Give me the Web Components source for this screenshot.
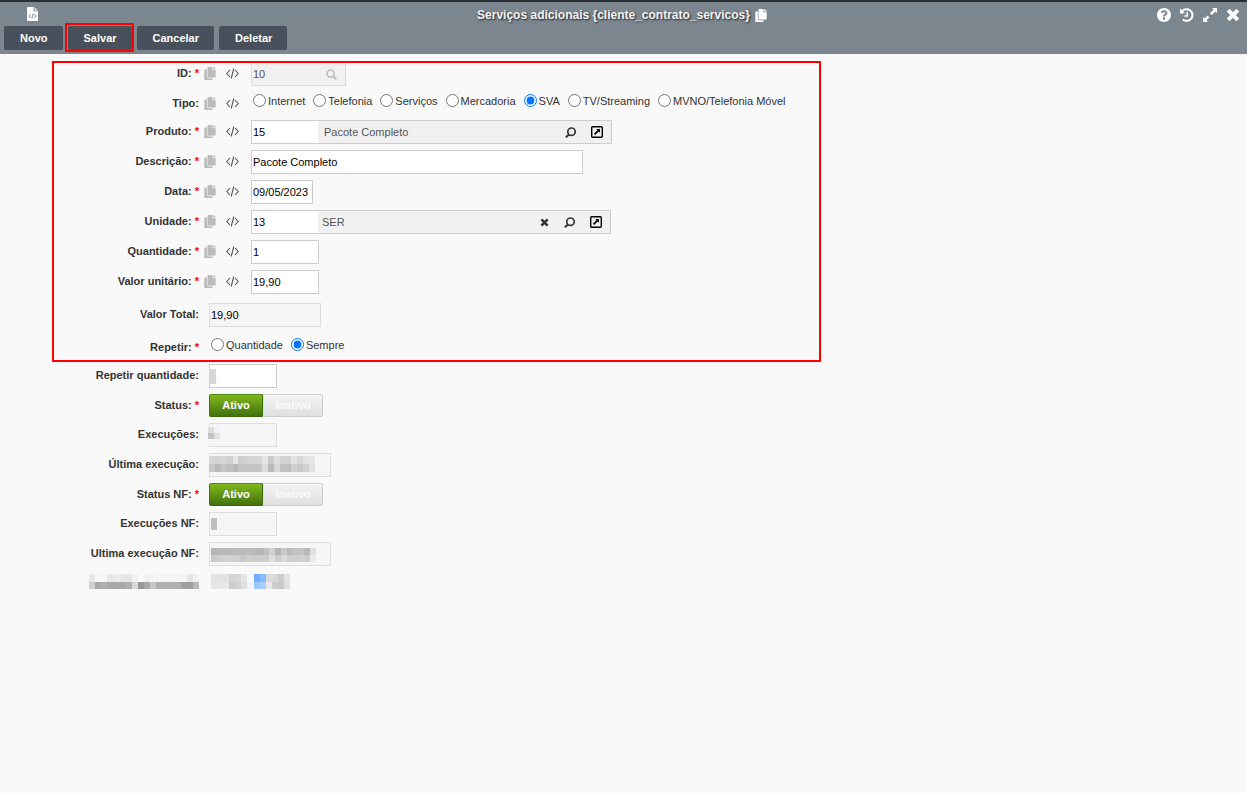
<!DOCTYPE html>
<html lang="pt-BR">
<head>
<meta charset="utf-8">
<title>Serviços adicionais</title>
<style>
  html, body { margin: 0; min-height: 100%; }
  body {
    background: #f9f9f9;
    color: #333;
    font-family: "Liberation Sans", Arial, sans-serif;
    font-size: 11px;
  }
</style>
</head>
<body>
<app-window>
  <window-bar slot="bar" heading="Serviços adicionais {cliente_contrato_servicos}">
    <tool-button>Novo</tool-button>
    <tool-button marked>Salvar</tool-button>
    <tool-button>Cancelar</tool-button>
    <tool-button>Deletar</tool-button>
  </window-bar>

  <marked-group>
    <text-field label="ID" required tools value="10" size="95" locked search></text-field>
    <radio-field label="Tipo" tools options="Internet|Telefonia|Serviços|Mercadoria|SVA|TV/Streaming|MVNO/Telefonia Móvel" value="SVA"></radio-field>
    <lookup-field label="Produto" required tools value="15" text="Pacote Completo" size="361"></lookup-field>
    <text-field label="Descrição" required tools value="Pacote Completo" size="332"></text-field>
    <text-field label="Data" required tools value="09/05/2023" size="62"></text-field>
    <lookup-field label="Unidade" required tools value="13" text="SER" size="360" clearable></lookup-field>
    <text-field label="Quantidade" required tools value="1" size="68"></text-field>
    <text-field label="Valor unitário" required tools value="19,90" size="68"></text-field>
    <text-field label="Valor Total" spaced value="19,90" size="112" computed></text-field>
    <radio-field label="Repetir" required spaced options="Quantidade|Sempre" value="Sempre"></radio-field>
  </marked-group>

  <text-field label="Repetir quantidade" size="68">
    <pixel-mask style="--x:0px;--y:5px" cols="2" width="13" height="15" cells="d6 fff d6 fc"></pixel-mask>
  </text-field>
  <toggle-field label="Status" required></toggle-field>
  <text-field label="Execuções" size="68" computed>
    <pixel-mask style="--x:-1px;--y:4px" cols="2" width="12" height="18" cells="dd f2 c4 e0 f4 f5"></pixel-mask>
  </text-field>
  <text-field label="Última execução" size="122" computed>
    <pixel-mask style="--x:0px;--y:3px" cols="18" width="106" height="16"
      cells="d6 d3 d6 d0 e6 ce d3 d4 d6 e6 cb de d3 d3 e2 d8 e4 e6 c8 b9 c4 c0 b8 c4 c4 c4 c4 dd bb d8 c0 c0 d0 c8 d2 e2"></pixel-mask>
  </text-field>
  <toggle-field label="Status NF" required></toggle-field>
  <text-field label="Execuções NF" size="68" computed>
    <pixel-mask style="--x:2px;--y:6px" cols="1" width="6" height="12" cells="bd"></pixel-mask>
  </text-field>
  <text-field label="Ultima execução NF" size="122" computed>
    <pixel-mask style="--x:2px;--y:6px" cols="18" width="105" height="14"
      cells="b5 b8 b8 b8 bb bb bb b8 b4 c0 d0 b3 c8 bb c3 c3 b8 de c8 d0 d2 d0 cf c8 d0 cc cc cc de cc d8 cf cf d2 cc ea"></pixel-mask>
  </text-field>
  <masked-row>
    <pixel-mask slot="label" inline cols="18" width="110" height="15"
      cells="e6 f5 f5 e6 ec e6 e6 f0 f9 f1 f5 f5 f4 f4 f4 f4 e6 f0 d0 a8 b0 a8 a8 a8 b0 d8 98 a8 c8 b0 b0 b0 b0 a0 a0 b8"></pixel-mask>
    <pixel-mask inline cols="13" width="79" height="15"
      cells="e4 e4 e2 d3 d8 e4 f4faff 70aeff 84bcff dadada d8 cc e4 e6 e8 e8 cc d2 e0 f0f5ff 9ac8ff a8d0ff e8 cc c8 e0"></pixel-mask>
  </masked-row>
</app-window>

<script>
const COPY = 'M320 448v40c0 13.255-10.745 24-24 24H24c-13.255 0-24-10.745-24-24V120c0-13.255 10.745-24 24-24h72v296c0 30.879 25.121 56 56 56h168zm0-344V0H152c-13.255 0-24 10.745-24 24v368c0 13.255 10.745 24 24 24h272c13.255 0 24-10.745 24-24V128H344c-13.2 0-24-10.8-24-24zm120.971-31.029L375.029 7.029A24 24 0 0 0 358.059 0H352v96h96v-6.059a24 24 0 0 0-7.029-16.97z';
const HELP = 'M504 256c0 136.997-111.043 248-248 248S8 392.997 8 256C8 119.083 119.043 8 256 8s248 111.083 248 248zM262.655 90c-54.497 0-89.255 22.957-116.549 63.758-3.536 5.286-2.353 12.415 2.715 16.258l34.699 26.31c5.205 3.947 12.621 3.008 16.665-2.122 17.864-22.658 30.113-35.797 57.303-35.797 20.429 0 45.698 13.148 45.698 32.958 0 14.976-12.363 22.667-32.534 33.976C247.128 238.528 216 254.941 216 296v4c0 6.627 5.373 12 12 12h56c6.627 0 12-5.373 12-12v-1.333c0-28.462 83.186-29.647 83.186-106.667 0-58.002-60.165-102-116.531-102zM256 338c-25.365 0-46 20.635-46 46 0 25.364 20.635 46 46 46s46-20.636 46-46c0-25.365-20.635-46-46-46z';
const svg = (w, h, box, body) => `<svg width="${w}" height="${h}" viewBox="${box}" aria-hidden="true">${body}</svg>`;
const ICONS = {
  copy: svg(12, 13, '0 0 448 512', `<path d="M60 96h60v310h230v50H60z" fill="currentColor" opacity=".45"/><path fill="currentColor" d="${COPY}"/>`),
  code: svg(13, 11, '0 0 13 11', '<path fill="none" stroke="currentColor" stroke-width="1.1" d="M4 2L.8 5.5 4 9M9 2l3.2 3.5L9 9M7.8.5L5.2 10.5"/>'),
  file: svg(11, 14, '0 0 11 14', '<path fill="currentColor" d="M1 0h5.6v4.2H11V13a1 1 0 0 1-1 1H1a1 1 0 0 1-1-1V1a1 1 0 0 1 1-1z"/><path fill="currentColor" opacity=".75" d="M7.5 0L11 3.5H7.5z"/><path fill="none" stroke="#6b757e" stroke-width=".9" d="M3.6 7.2L1.8 9l1.8 1.8M7.4 7.2L9.2 9l-1.8 1.8M6.2 6.4l-1.4 5.2"/>'),
  help: svg(14, 14, '8 8 496 496', `<path fill="currentColor" d="${HELP}"/>`),
  history: svg(14, 14, '0 0 14 14', '<path fill="none" stroke="currentColor" stroke-width="2" d="M2 3.6A5.8 5.8 0 1 1 2.8 11.4"/><path fill="currentColor" d="M0 .6V5.6h5z"/><path fill="none" stroke="currentColor" stroke-width="1.5" d="M7.2 3.8v4.1H4.4"/>'),
  expand: svg(14, 14, '0 0 14 14', '<path fill="currentColor" d="M9 0h5v5l-1.6-1.6-3.6 3.6-1.8-1.8 3.6-3.6zM0 9l1.6 1.6 3-3 1.8 1.8-3 3L5 14H0z"/>'),
  close: svg(14, 14, '0 0 14 14', '<path stroke="currentColor" stroke-width="4" d="M2.2 2.2l9.6 9.6M11.8 2.2L2.2 11.8"/>'),
  glass: svg(11, 11, '0 0 11 11', '<circle cx="4.6" cy="4.6" r="3.6" fill="none" stroke="currentColor" stroke-width="1.6"/><path stroke="currentColor" stroke-width="2" d="M7.2 7.2l3 3"/>'),
  find: svg(11, 11, '0 0 11 11', '<circle cx="6.5" cy="4.7" r="3.7" fill="none" stroke="currentColor" stroke-width="1.7"/><path stroke="currentColor" stroke-width="2" d="M4 7.4L.8 10.2"/>'),
  open: svg(12, 12, '0 0 12 12', '<rect x=".7" y=".7" width="10.6" height="10.6" rx="1" fill="none" stroke="#000" stroke-width="1.4"/><path fill="#000" d="M5.2 3h3.8v3.8L7.7 5.6 4.2 9.1 2.9 7.8l3.5-3.5z"/>'),
  clear: svg(9, 9, '0 0 9 9', '<path stroke="#333" stroke-width="2.5" d="M1.4 1.4l6.2 6.2M7.6 1.4L1.4 7.6"/>')
};
const iconButton = (icon, title) => `<button type="button" class="icon ${icon}" aria-label="${title}">${ICONS[icon]}</button>`;

const BASE = `
  * { box-sizing: border-box; }
  button, input { font: inherit; margin: 0; }
  svg { display: block; }
  .icon { padding: 0; border: 0; background: none; color: inherit; display: block; flex: none; cursor: pointer; }
`;
const define = (name, render, after) => customElements.define(name, class extends HTMLElement {
  connectedCallback() {
    if (this.shadowRoot) return;
    const root = this.attachShadow({ mode: 'open' });
    const template = document.createElement('template');
    template.innerHTML = render(this);
    root.append(template.content.cloneNode(true));
    if (after) after(root, this);
  }
});

define('app-window', () => `<style>
    :host { display: block; }
    form { display: flex; flex-direction: column; gap: 6px; padding: 8px 0; }
  </style>
  <slot name="bar"></slot>
  <main><form><slot></slot></form></main>`);

define('window-bar', el => `<style>${BASE}
    :host { display: block; background: #7c868f; color: #fff; border-top: 2px solid #2a2f33; padding: 0 4px 4px; }
    .top { display: grid; grid-template-columns: 1fr auto 1fr; height: 24px; align-items: center; }
    .start { padding-left: 23px; }
    .title { display: flex; align-items: center; gap: 5px; padding: 2px 3px 0 0; }
    h1 { margin: 0; font-size: 12px; line-height: 14px; color: #f4f4f4; text-shadow: 1px 1px 2px #222; }
    .actions { display: flex; justify-content: flex-end; gap: 9px; padding: 2px 3px 0 0; }
    nav { display: flex; gap: 5px; }
  </style>
  <div class="top">
    <div class="start">${iconButton('file', 'Código-fonte')}</div>
    <div class="title"><h1>${el.getAttribute('heading')}</h1>${iconButton('copy', 'Copiar')}</div>
    <div class="actions">${iconButton('help', 'Ajuda')}${iconButton('history', 'Histórico')}${iconButton('expand', 'Expandir')}${iconButton('close', 'Fechar')}</div>
  </div>
  <nav><slot></slot></nav>`);

define('tool-button', () => `<style>${BASE}
    :host { display: block; position: relative; }
    button { display: block; height: 24px; padding: 0 15px 0 16px; border: 0; border-radius: 2px; background: #48515b; color: #fff; font-weight: bold; }
    :host([marked])::after { content: ""; position: absolute; inset: -3px -2px -2px -3px; border: 2px solid #f00; pointer-events: none; }
  </style><button type="button"><slot></slot></button>`);

define('marked-group', () => `<style>
    :host { display: flex; flex-direction: column; gap: 6px; position: relative; }
    :host::after { content: ""; position: absolute; box-sizing: border-box; top: -1px; bottom: -4px; left: 52px; width: 769px; border: 2px solid #f00; pointer-events: none; }
  </style><slot></slot>`);

define('pixel-mask', el => {
  const cols = +el.getAttribute('cols');
  const cells = el.getAttribute('cells').split(' ');
  const rects = cells.map((c, i) => {
    const fill = c.length === 2 ? c + c + c : c;
    return `<rect x="${i % cols}" y="${Math.floor(i / cols)}" width="1" height="1" fill="#${fill}"/>`;
  }).join('');
  return `<style>
    :host { position: absolute; left: var(--x); top: var(--y); pointer-events: none; }
    :host([inline]) { position: static; display: block; }
    svg { display: block; }
  </style><svg width="${el.getAttribute('width')}" height="${el.getAttribute('height')}" viewBox="0 0 ${cols} ${cells.length / cols}" preserveAspectRatio="none" shape-rendering="crispEdges" aria-hidden="true">${rects}</svg>`;
});

const FIELD = `${BASE}
  :host { display: block; }
  :host([spaced]) { margin-top: 3px; }
  .row { display: flex; align-items: flex-start; }
  .caption { width: 199px; flex: none; text-align: right; line-height: 22px; font-weight: bold; color: #333; }
  .caption i { color: #f00; font-style: normal; }
  .tools { display: flex; align-items: center; gap: 10px; height: 22px; padding: 0 2px 0 5px; color: #bbb; }
  .tools .code { color: #555; }
  .control { position: relative; display: flex; margin-left: 10px; }
  input.box, .box { width: var(--size); height: 24px; border: 1px solid #ccc; border-radius: 0; background: #fff; color: #000; padding: 0 1px; outline: 0; }
  .computed .box { background: #f5f5f5; border-color: #ddd; }
`;
const field = (el, style, control, { tag = 'label', kind = '' } = {}) => {
  const star = el.hasAttribute('required') ? ' <i>*</i>' : '';
  const tie = tag === 'label' ? 'for="control"' : 'id="caption"';
  const tools = el.hasAttribute('tools') ? `<div class="tools">${iconButton('copy', 'Copiar')}${iconButton('code', 'Ver código')}</div>` : '';
  return `<style>${FIELD}${style}:host { --size: ${el.getAttribute('size') || 0}px; }</style>
    <div class="row ${kind}"><${tag} class="caption" ${tie}>${el.getAttribute('label')}:${star}</${tag}>${tools}<div class="control">${control}</div></div>`;
};

define('text-field', el => {
  const locked = el.hasAttribute('locked');
  const readonly = locked || el.hasAttribute('computed') ? 'readonly' : '';
  return field(el, `
    .locked .box { background: #f1f1f1; border-color: #ddd; color: #555; }
    .glass { position: absolute; right: 9px; top: 7px; color: #bbb; }
  `, `<input class="box" id="control" type="text" value="${el.getAttribute('value') || ''}" ${readonly}>${el.hasAttribute('search') ? iconButton('glass', 'Pesquisar') : ''}<slot></slot>`,
  { kind: locked ? 'locked' : el.hasAttribute('computed') ? 'computed' : '' });
});

define('lookup-field', el => field(el, `
    .box { display: flex; align-items: center; padding: 0 8px 0 0; background: #f1f1f1; color: #333; }
    .box input { height: 22px; border: 0; padding: 0 1px; outline: 0; }
    .key { width: 66px; background: #fff; color: #000; }
    .box .text { flex: 1; min-width: 0; padding-left: 6px; background: none; color: #555; }
    :host([clearable]) .box .text { padding-left: 4px; }
    .clear, .find { margin-right: 15px; }
  `, `<div class="box"><input class="key" id="control" type="text" value="${el.getAttribute('value')}"><input class="text" type="text" aria-label="Nome" readonly value="${el.getAttribute('text')}">${el.hasAttribute('clearable') ? iconButton('clear', 'Limpar') : ''}${iconButton('find', 'Pesquisar')}${iconButton('open', 'Abrir')}</div>`));

define('radio-field', el => field(el, `
    .control { gap: 8px; padding-left: 2px; height: 22px; }
    .choice { display: flex; align-items: center; gap: 2px; height: 17px; white-space: nowrap; }
    .choice input { width: 13px; height: 13px; }
    .choice span { line-height: 13px; padding-top: 1px; }
  `, el.getAttribute('options').split('|').map(o => `<label class="choice"><input type="radio" name="option" value="${o}" ${o === el.getAttribute('value') ? 'checked' : ''}><span>${o}</span></label>`).join(''),
  { tag: 'div' }), root => {
    const group = root.querySelector('.control');
    group.setAttribute('role', 'radiogroup');
    group.setAttribute('aria-labelledby', 'caption');
  });

define('toggle-field', el => field(el, `
    .control button { height: 23px; padding: 0 0 2px; font-weight: bold; color: #fafafa; border: 1px solid #ccc; }
    .control .off { width: 60px; border-left-color: #ddd; border-radius: 0 2px 2px 0; background: linear-gradient(#f3f3f3, #e0e0e0); box-shadow: inset 0 1px #fff; }
    .control .on { width: 54px; border-color: #4f8a12 #3f7210 #3b680d; border-radius: 2px 0 0 2px; color: #fff; background: linear-gradient(#82b71c, #41720e); }
  `, `<button type="button" class="on" aria-pressed="true">Ativo</button><button type="button" class="off" aria-pressed="false">Inativo</button>`,
  { tag: 'div' }), root => {
    root.querySelectorAll('.control button').forEach(b => b.setAttribute('aria-describedby', 'caption'));
  });

define('masked-row', () => `<style>
    :host { display: flex; align-items: flex-start; gap: 12px; padding-top: 2px; }
    .caption { width: 199px; display: flex; justify-content: flex-end; }
  </style><div class="caption"><slot name="label"></slot></div><slot></slot>`);
</script>
</body>
</html>
